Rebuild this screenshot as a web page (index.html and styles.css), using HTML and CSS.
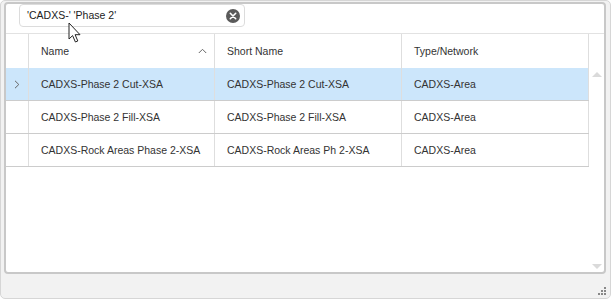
FILE: index.html
```html
<!DOCTYPE html>
<html lang="en">

<head>
    <meta charset="UTF-8">
    <meta name="viewport" content="width=device-width, initial-scale=1.0">
    <title>Layer List</title>
    <link rel="stylesheet" href="styles.css">
</head>

<body>
    <div class="window">
        <div class="panel">
            <div class="search">
                <span class="search_text">'CADXS-' 'Phase 2'</span>
                <span class="clear">
                    <svg width="14" height="14" viewBox="0 0 14 14">
                        <circle cx="7" cy="7" r="7" fill="#5a5a5a" />
                        <path d="M4.3 4.3 L9.7 9.7 M9.7 4.3 L4.3 9.7" stroke="#fff" stroke-width="1.6" stroke-linecap="round" />
                    </svg>
                </span>
            </div><!-- .search end -->

            <div class="grid">
                <div class="head">
                    <div class="cell ind"></div>
                    <div class="cell name">Name
                        <svg class="sort" width="9" height="6" viewBox="0 0 9 6">
                            <path d="M0.8 5 L4.5 1.3 L8.2 5" fill="none" stroke="#666" stroke-width="1" />
                        </svg>
                    </div>
                    <div class="cell short">Short Name</div>
                    <div class="cell type">Type/Network</div>
                    <div class="cell corner"></div>
                </div><!-- .head end -->

                <div class="body">
                    <div class="rows">
                        <div class="row on">
                            <div class="cell ind">
                                <svg width="6" height="9" viewBox="0 0 6 9">
                                    <path d="M1 0.8 L4.8 4.5 L1 8.2" fill="none" stroke="#666" stroke-width="1" />
                                </svg>
                            </div>
                            <div class="cell name">CADXS-Phase 2 Cut-XSA</div>
                            <div class="cell short">CADXS-Phase 2 Cut-XSA</div>
                            <div class="cell type">CADXS-Area</div>
                        </div>
                        <div class="row">
                            <div class="cell ind"></div>
                            <div class="cell name">CADXS-Phase 2 Fill-XSA</div>
                            <div class="cell short">CADXS-Phase 2 Fill-XSA</div>
                            <div class="cell type">CADXS-Area</div>
                        </div>
                        <div class="row">
                            <div class="cell ind"></div>
                            <div class="cell name">CADXS-Rock Areas Phase 2-XSA</div>
                            <div class="cell short">CADXS-Rock Areas Ph 2-XSA</div>
                            <div class="cell type">CADXS-Area</div>
                        </div>
                    </div><!-- .rows end -->

                    <div class="vscroll">
                        <span class="arrow up"></span>
                        <span class="arrow down"></span>
                    </div>
                </div><!-- .body end -->
            </div><!-- .grid end -->
        </div><!-- .panel end -->

        <div class="status">
            <svg class="grip" width="9" height="9" viewBox="0 0 9 9">
                <rect x="7" y="1" width="2" height="2" fill="#888" />
                <rect x="4" y="4" width="2" height="2" fill="#888" />
                <rect x="7" y="4" width="2" height="2" fill="#888" />
                <rect x="1" y="7" width="2" height="2" fill="#888" />
                <rect x="4" y="7" width="2" height="2" fill="#888" />
                <rect x="7" y="7" width="2" height="2" fill="#888" />
            </svg>
        </div>

        <svg class="cursor" width="14" height="22" viewBox="0 0 14 22">
            <path d="M1 1 L1 17 L4.6 13.6 L7.4 20 L9.8 19 L7.1 12.7 L12 12.7 Z" fill="#fff" stroke="#222" stroke-width="1" stroke-linejoin="round" />
        </svg>
    </div><!-- .window end -->
</body>

</html>
```

FILE: styles.css
```css
@charset "utf-8";

* {
    margin: 0;
    padding: 0;
    box-sizing: border-box;
}

body {
    background-color: #fff;
    font-family: "Liberation Sans", Arial, sans-serif;
    font-size: 10.5px;
    line-height: 1;
    color: #333;
}

.window {
    position: relative;
    width: 611px;
    height: 299px;
    border: 1px solid #d6d6d6;
    border-radius: 5px;
    background-color: #f2f2f2;
    display: flex;
    flex-direction: column;
}

.panel {
    margin: 1px 4px 0 3px;
    height: 272px;
    border: 2px solid #c8c8c8;
    border-radius: 4px;
    background-color: #fff;
    display: flex;
    flex-direction: column;
    overflow: hidden;
}

.search {
    margin: 0 0 0 13px;
    width: 226px;
    height: 23px;
    border: 1px solid #dcdcdc;
    border-radius: 4px;
    display: flex;
    align-items: center;
    justify-content: space-between;
    padding: 0 4px 0 7px;
}

.search_text {
    font-size: 10.5px;
    color: #222;
}

.clear svg {
    display: block;
}

.grid {
    margin-top: 6px;
    border-top: 1px solid #e2e2e2;
    flex: 1;
    display: flex;
    flex-direction: column;
}

.head {
    display: flex;
    height: 34px;
}

.cell {
    border-right: 1px solid #dedede;
    display: flex;
    align-items: center;
    padding-left: 12px;
    white-space: nowrap;
}

.ind {
    width: 23px;
    padding-left: 0;
    justify-content: center;
}

.name {
    width: 186px;
    position: relative;
}

.short {
    width: 187px;
}

.type {
    width: 187px;
}

.corner {
    border-right: 0;
    flex: 1;
}

.sort {
    position: absolute;
    right: 7px;
    top: 14px;
}

.body {
    flex: 1;
    display: flex;
}

.rows {
    width: 583px;
}

.row {
    display: flex;
    height: 33px;
    border-bottom: 1px solid #cccccc;
}

.row.on {
    background-color: #cce6fb;
}

.row .cell {
    padding-top: 1px;
}

.vscroll {
    flex: 1;
    display: flex;
    flex-direction: column;
    justify-content: space-between;
    align-items: center;
    padding: 4px 0 3px;
}

.arrow {
    width: 0;
    height: 0;
    border-left: 5px solid transparent;
    border-right: 5px solid transparent;
}

.arrow.up {
    border-bottom: 5px solid #dadada;
}

.arrow.down {
    border-top: 5px solid #dadada;
}

.status {
    flex: 1;
    display: flex;
    justify-content: flex-end;
    align-items: flex-end;
    padding: 0 4px 3px 0;
}

.cursor {
    position: absolute;
    left: 67px;
    top: 21px;
}
```
